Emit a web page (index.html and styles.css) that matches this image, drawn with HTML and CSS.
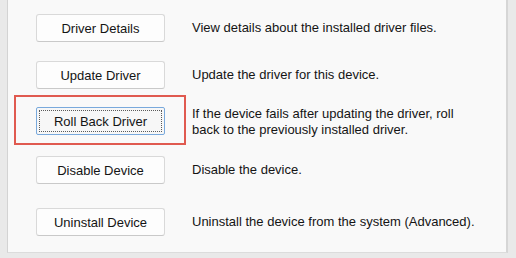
FILE: index.html
```html
<!DOCTYPE html>
<html lang="en">
<head>
<meta charset="utf-8">
<title>Driver</title>
<link rel="stylesheet" href="styles.css">
</head>
<body>
<div class="frame">
  <div class="panel">
    <div class="row r1">
      <button class="btn">Driver Details</button>
      <p class="desc">View details about the installed driver files.</p>
    </div>
    <div class="row r2">
      <button class="btn">Update Driver</button>
      <p class="desc">Update the driver for this device.</p>
    </div>
    <div class="row r3">
      <span class="highlight"></span>
      <button class="btn focused"><span class="focus-ring">Roll Back Driver</span></button>
      <p class="desc">If the device fails after updating the driver, roll<br>back to the previously installed driver.</p>
    </div>
    <div class="row r4">
      <button class="btn">Disable Device</button>
      <p class="desc">Disable the device.</p>
    </div>
    <div class="row r5">
      <button class="btn">Uninstall Device</button>
      <p class="desc">Uninstall the device from the system (Advanced).</p>
    </div>
  </div>
</div>
</body>
</html>
```
FILE: styles.css
```css
html, body {
  margin: 0;
  padding: 0;
}
body {
  width: 516px;
  height: 258px;
  background: #e9e9e9;
  font-family: "Liberation Sans", Arial, sans-serif;
  font-size: 13px;
  color: #141414;
  overflow: hidden;
}
.frame {
  padding-left: 7px;
  width: 501px;
}
.panel {
  height: 252px;
  background: #f9f9f9;
  border-left: 1px solid #d3d3d3;
  border-right: 2px solid #d6d6d6;
  border-bottom: 1px solid #dcdcdc;
  padding-left: 28px;
  display: flex;
  flex-direction: column;
}
.row {
  position: relative;
  display: flex;
  align-items: center;
  gap: 27px;
}
.r1 { margin-top: 14px; }
.r2 { margin-top: 19px; }
.r3 { margin-top: 18px; align-items: flex-start; }
.r4 { margin-top: 18px; }
.r5 { margin-top: 24px; }
.btn {
  box-sizing: border-box;
  width: 129px;
  height: 28px;
  flex: none;
  margin: 0;
  padding: 0;
  background: #fdfdfd;
  border: 1px solid #d9d9d9;
  border-bottom-color: #c9c9c9;
  border-radius: 3px;
  font-family: inherit;
  font-size: 13px;
  color: #141414;
  display: flex;
  align-items: center;
  justify-content: center;
}
.btn.focused {
  border: 1px solid #79a9dc;
  border-radius: 2px;
  padding: 2px;
  background: #f7f7f7;
}
.focus-ring {
  box-sizing: border-box;
  width: 100%;
  height: 100%;
  border: 1px dotted #5a5a5a;
  display: flex;
  align-items: center;
  justify-content: center;
}
.desc {
  margin: 0;
  line-height: 16px;
  white-space: nowrap;
}
.r3 .desc {
  margin-top: -1px;
}
.highlight {
  position: absolute;
  left: -22px;
  top: -12px;
  width: 172px;
  height: 50px;
  box-sizing: border-box;
  border: 2px solid #e05a50;
  pointer-events: none;
}
```
